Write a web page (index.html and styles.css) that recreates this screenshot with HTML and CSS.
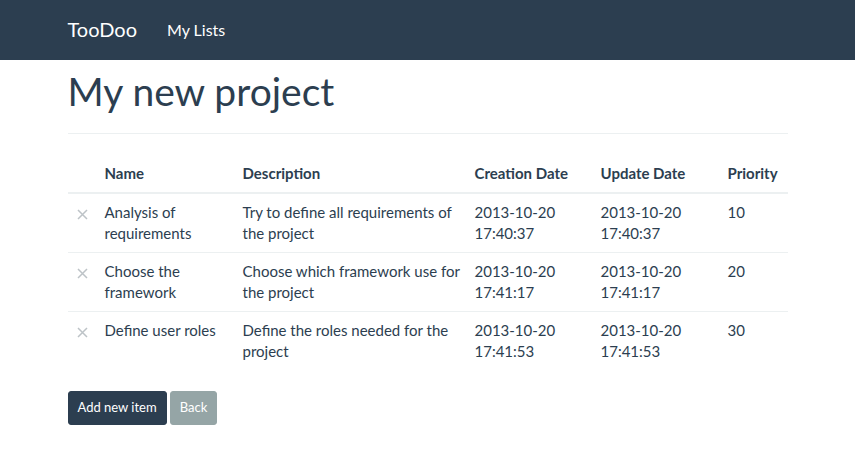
FILE: index.html
```html
<!DOCTYPE html>
<html>
<head>
<meta charset="utf-8">
<title>TooDoo</title>
<link rel="stylesheet" href="styles.css">
</head>
<body>
<nav class="navbar">
  <div class="container navbar-inner">
    <a class="brand" href="#">TooDoo</a>
    <a class="nav-link" href="#">My Lists</a>
  </div>
</nav>
<main class="container">
  <div class="page-header">
    <h1>My new project</h1>
  </div>
  <table class="table">
    <thead>
      <tr>
        <th class="col-icon"></th>
        <th class="col-name">Name</th>
        <th class="col-desc">Description</th>
        <th class="col-created">Creation Date</th>
        <th class="col-updated">Update Date</th>
        <th class="col-priority">Priority</th>
      </tr>
    </thead>
    <tbody>
      <tr>
        <td><svg class="remove" viewBox="0 0 11 11" width="11" height="11"><path d="M1 1L10 10M10 1L1 10"/></svg></td>
        <td>Analysis of requirements</td>
        <td class="desc">Try to define all requirements of the project</td>
        <td>2013-10-20 17:40:37</td>
        <td>2013-10-20 17:40:37</td>
        <td>10</td>
      </tr>
      <tr>
        <td><svg class="remove" viewBox="0 0 11 11" width="11" height="11"><path d="M1 1L10 10M10 1L1 10"/></svg></td>
        <td>Choose the framework</td>
        <td class="desc">Choose which framework use for the project</td>
        <td>2013-10-20 17:41:17</td>
        <td>2013-10-20 17:41:17</td>
        <td>20</td>
      </tr>
      <tr>
        <td><svg class="remove" viewBox="0 0 11 11" width="11" height="11"><path d="M1 1L10 10M10 1L1 10"/></svg></td>
        <td>Define user roles</td>
        <td class="desc">Define the roles needed for the project</td>
        <td>2013-10-20 17:41:53</td>
        <td>2013-10-20 17:41:53</td>
        <td>30</td>
      </tr>
    </tbody>
  </table>
  <div class="actions">
    <a class="btn btn-primary" href="#">Add new item</a>
    <a class="btn btn-default" href="#">Back</a>
  </div>
</main>
</body>
</html>
```
FILE: styles.css
```css
* { box-sizing: border-box; }
html, body { margin: 0; padding: 0; }
body {
  font-family: Lato, "Helvetica Neue", Helvetica, Arial, sans-serif;
  font-size: 15px;
  line-height: 21px;
  color: #2c3e50;
  background: #fff;
}
a { text-decoration: none; }
.container {
  width: 750px;
  margin: 0 auto;
  padding: 0 15px;
}
.navbar {
  background: #2c3e50;
  height: 60px;
}
.navbar-inner {
  display: flex;
  align-items: flex-start;
  height: 60px;
}
.brand {
  color: #fff;
  font-size: 20px;
  line-height: 21px;
  padding: 18.5px 15px 20.5px 0;
}
.nav-link {
  color: #fff;
  font-size: 16px;
  line-height: 21px;
  padding: 18.5px 15px 20.5px;
}
.page-header {
  margin: 0 0 21px;
  padding-top: 10px;
  padding-bottom: 20px;
  border-bottom: 1px solid #ecf0f1;
}
h1 {
  margin: 0;
  font-size: 39px;
  font-weight: 400;
  line-height: 43px;
}
.table {
  width: 100%;
  border-collapse: collapse;
  border-spacing: 0;
  margin-bottom: 21px;
}
.table th, .table td {
  padding: 8px;
  text-align: left;
  vertical-align: top;
  line-height: 21px;
}
.table td.desc { padding-right: 2px; }
.table th {
  font-weight: 700;
  border-bottom: 2px solid #ecf0f1;
}
.table tbody tr + tr td { border-top: 1px solid #ecf0f1; }
.col-icon { width: 29px; }
.col-name { width: 138px; }
.col-desc { width: 232px; }
.col-created { width: 126px; }
.col-updated { width: 127px; }
.remove {
  display: block;
  margin: 7px 0 0 1px;
  stroke: #bdc3c7;
  stroke-width: 1.5;
  fill: none;
}
.actions { display: flex; gap: 3px; }
.btn {
  display: inline-block;
  font-size: 13px;
  line-height: 1.5;
  padding: 6px 9px;
  border-radius: 3px;
  color: #fff;
  border: 1px solid transparent;
}
.btn-primary { background: #2c3e50; border-color: #2c3e50; }
.btn-default { background: #95a5a6; border-color: #95a5a6; }
```
